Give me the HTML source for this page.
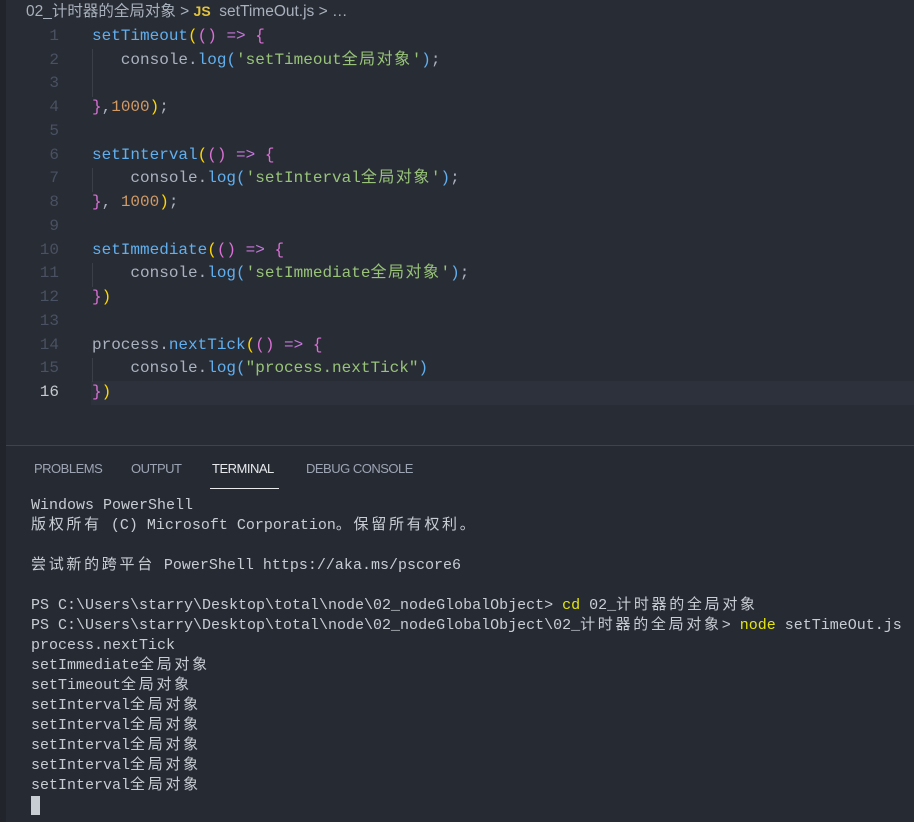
<!DOCTYPE html>
<html><head><meta charset="utf-8"><style>
body{margin:0;width:914px;height:822px;background:#282c34;overflow:hidden;position:relative;font-family:"Liberation Mono","Noto Sans CJK SC",monospace}
.strip{position:absolute;left:0;top:0;width:6px;height:822px;background:#21252b}
.bc{position:absolute;left:26px;top:1px;font:15.5px "Liberation Sans","Noto Sans CJK SC",sans-serif;color:#a9b1bd;line-height:20px;white-space:pre}
.ln{position:absolute;left:30px;width:29px;text-align:right;color:#495162;font-size:16px;line-height:24px}
.code{position:absolute;left:92px;font-size:16px;line-height:24px;white-space:pre;color:#abb2bf}
.c{letter-spacing:1.5px}
.b{color:#61afef}.y{color:#e5c07b}.p{color:#da70d6}.g{color:#98c379}.o{color:#d19a66}.k{color:#c678dd}.yy{color:#ffd700}
.hl{position:absolute;left:91px;right:0;top:381px;height:24px;background:#2c313c}
.guide{position:absolute;left:92px;width:1px;background:#3b4048}
.panel{position:absolute;left:6px;top:445px;right:0;bottom:0;background:#262a33;border-top:1px solid #3e4350}
.tab{position:absolute;top:15px;font:13px "Liberation Sans",sans-serif;color:#9da5b4;letter-spacing:-0.5px}
.term{position:absolute;left:25px;top:50px;font-size:15px;line-height:20px;white-space:pre;color:#c8cdd4}
.t{letter-spacing:2.7px}
.cmd{color:#e5e510}
</style></head><body>
<div class="strip"></div>
<div class="bc">02_计时器的全局对象 &gt; <b style="color:#e5c33a;font-size:14px">JS</b>  setTimeOut.js &gt; …</div>
<div class="hl"></div>
<div class="guide" style="top:49px;height:48px"></div>
<div class="guide" style="top:168px;height:24px"></div>
<div class="guide" style="top:263px;height:24px"></div>
<div class="guide" style="top:358px;height:24px"></div>
<div class="ln" style="top:25px;line-height:23.73px">1<br>2<br>3<br>4<br>5<br>6<br>7<br>8<br>9<br>10<br>11<br>12<br>13<br>14<br>15<br><span style="color:#c5c8ce">16</span></div>
<div class="code" style="top:25px;line-height:23.73px"><span class="b">setTimeout</span><span class="yy">(</span><span class="p">()</span> <span class="k">=&gt;</span> <span class="p">{</span>
   console.<span class="b">log</span><span class="b">(</span><span class="g">'setTimeout<span class="c">全局对象</span>'</span><span class="b">)</span>;

<span class="p">}</span>,<span class="o">1000</span><span class="yy">)</span>;

<span class="b">setInterval</span><span class="yy">(</span><span class="p">()</span> <span class="k">=&gt;</span> <span class="p">{</span>
    console.<span class="b">log</span><span class="b">(</span><span class="g">'setInterval<span class="c">全局对象</span>'</span><span class="b">)</span>;
<span class="p">}</span>, <span class="o">1000</span><span class="yy">)</span>;

<span class="b">setImmediate</span><span class="yy">(</span><span class="p">()</span> <span class="k">=&gt;</span> <span class="p">{</span>
    console.<span class="b">log</span><span class="b">(</span><span class="g">'setImmediate<span class="c">全局对象</span>'</span><span class="b">)</span>;
<span class="p">}</span><span class="yy">)</span>

process.<span class="b">nextTick</span><span class="yy">(</span><span class="p">()</span> <span class="k">=&gt;</span> <span class="p">{</span>
    console.<span class="b">log</span><span class="b">(</span><span class="g">"process.nextTick"</span><span class="b">)</span>
<span class="p">}</span><span class="yy">)</span></div>
<div class="panel">
<div class="tab" style="left:28px">PROBLEMS</div>
<div class="tab" style="left:125px">OUTPUT</div>
<div class="tab" style="left:206px;color:#e7e9ec">TERMINAL</div>
<div style="position:absolute;left:204px;top:42px;width:69px;height:1px;background:#e7e9ec"></div>
<div class="tab" style="left:300px">DEBUG CONSOLE</div>
<div class="term">Windows PowerShell
<span class="t">版权所有</span> (C) Microsoft Corporation<span class="t">。保留所有权利。</span>

<span class="t">尝试新的跨平台</span> PowerShell https://aka.ms/pscore6

PS C:\Users\starry\Desktop\total\node\02_nodeGlobalObject&gt; <span class="cmd">cd</span> 02_<span class="t">计时器的全局对象</span>
PS C:\Users\starry\Desktop\total\node\02_nodeGlobalObject\02_<span class="t">计时器的全局对象</span>&gt; <span class="cmd">node</span> setTimeOut.js
process.nextTick
setImmediate<span class="t">全局对象</span>
setTimeout<span class="t">全局对象</span>
setInterval<span class="t">全局对象</span>
setInterval<span class="t">全局对象</span>
setInterval<span class="t">全局对象</span>
setInterval<span class="t">全局对象</span>
setInterval<span class="t">全局对象</span>
<span style="display:inline-block;width:9px;height:19px;background:#c8cdd4;vertical-align:top"></span></div>
</div>
</body></html>
